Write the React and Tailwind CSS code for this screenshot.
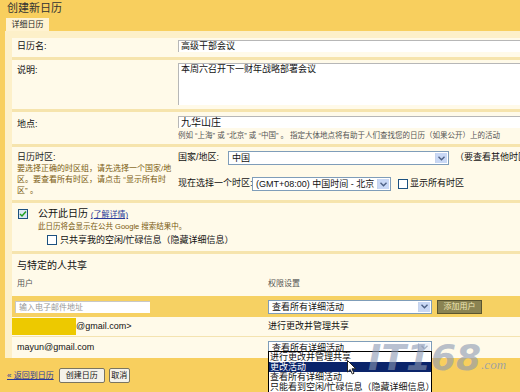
import React from 'react'

const FONT = { fontFamily: "'Liberation Sans', 'Noto Sans CJK SC', sans-serif" }

function Arrow({ faded }) {
  return (
    <div className={`w-[12px] h-full flex items-center justify-center border-l border-[#c6d3ec] ${faded ? 'bg-[#eef1f7]' : 'bg-[#c9d8f5]'}`}>
      <svg width="7" height="5" viewBox="0 0 7 5">
        <path d="M0.5 0.8 L3.5 3.8 L6.5 0.8" fill="none" stroke={faded ? '#a9b3c6' : '#4d6185'} strokeWidth="1.4" />
      </svg>
    </div>
  )
}

function Select({ w, text, faded }) {
  return (
    <div className={`${w} h-[14px] shrink-0 bg-white border border-[#7f9db9] flex items-stretch`}>
      <span className="flex-1 pl-[3px] text-[9px] leading-[12px] text-[#111] whitespace-nowrap overflow-hidden">{text}</span>
      <div className="p-[1px] flex"><Arrow faded={faded} /></div>
    </div>
  )
}

function Box({ checked }) {
  return (
    <div className={`w-[10px] h-[10px] shrink-0 border border-[#1c5180] flex items-center justify-center ${checked ? 'bg-[#dbe6f3]' : 'bg-white'}`}>
      {checked && (
        <svg width="8" height="8" viewBox="0 0 8 8">
          <path d="M1 4 L3 6 L7 1.5" fill="none" stroke="#21a121" strokeWidth="1.5" />
        </svg>
      )}
    </div>
  )
}

function Row({ children, className = '' }) {
  return <div className={`flex border-b-[3px] border-[#f6e4ad] ${className}`}>{children}</div>
}

export default function App() {
  return (
    <div className="w-[520px] h-[392px] overflow-hidden relative bg-[#f8cf5e] text-[#111]" style={FONT}>
      {/* title */}
      <div className="h-[18px] pl-[7px] text-[11px] leading-[16px] text-[#333]">创建新日历</div>
      {/* tabs */}
      <div className="h-[13px] flex">
        <div className="ml-[6px] w-[43px] bg-[#fff3d2] text-[8px] leading-[13px] text-center text-[#222]">详细日历</div>
      </div>

      {/* panel */}
      <div className="ml-[5px] bg-[#fdf0c9] pt-[7px] pl-[7px] h-[327px]">
        <div className="bg-[#fffae9] h-full">
          <Row className="h-[22px]">
            <div className="w-[166px] shrink-0 pl-[5px] pt-[2px] text-[9px] leading-[12px]">日历名:</div>
            <div className="flex-1 min-w-0 pt-[2px]">
              <div className="h-[12px] bg-white border-t border-l border-[#b7b7b7] pl-[2px] text-[9px] leading-[11px]">高级干部会议</div>
            </div>
          </Row>
          <Row className="h-[52px]">
            <div className="w-[166px] shrink-0 pl-[5px] pt-[4px] text-[9px] leading-[12px]">说明:</div>
            <div className="flex-1 min-w-0 pt-[3px]">
              <div className="h-[42px] bg-white border-t border-l border-[#b7b7b7] pl-[2px] text-[9px] leading-[11px]">本周六召开下一财年战略部署会议</div>
            </div>
          </Row>
          <Row className="h-[35px]">
            <div className="w-[166px] shrink-0 pl-[5px] pt-[6px] text-[9px] leading-[12px]">地点:</div>
            <div className="flex-1 min-w-0 pt-[4px]">
              <div className="h-[12px] bg-white border-t border-l border-[#b7b7b7] pl-[2px] text-[10px] leading-[11px]">九华山庄</div>
              <div className="mt-[3px] text-[7.5px] leading-[10px] text-[#555] whitespace-nowrap overflow-hidden">例如 “上海” 或 “北京” 或 “中国” 。 指定大体地点将有助于人们查找您的日历（如果公开）上的活动</div>
            </div>
          </Row>
          <Row className="h-[56px]">
            <div className="w-[166px] shrink-0 pl-[5px] pt-[4px]">
              <div className="text-[9px] leading-[12px] text-[#222]">日历时区:</div>
              <div className="text-[8px] leading-[11px] text-[#7a5a10] w-[156px]">要选择正确的时区组，请先选择一个国家/地区。要查看所有时区，请点击 “显示所有时区” 。</div>
            </div>
            <div className="flex-1 min-w-0 pt-[4px]">
              <div className="flex items-center h-[14px]">
                <span className="w-[50px] shrink-0 text-[9px]">国家/地区:</span>
                <Select w="w-[221px]" text="中国" />
                <span className="ml-[6px] text-[9px] whitespace-nowrap">（要查看其他时区，</span>
              </div>
              <div className="flex items-center h-[14px] mt-[12px]">
                <span className="w-[74px] shrink-0 text-[9px] whitespace-nowrap">现在选择一个时区:</span>
                <Select w="w-[139px]" text="(GMT+08:00) 中国时间 - 北京" />
                <div className="ml-[7px]"><Box /></div>
                <span className="ml-[2px] text-[9px] whitespace-nowrap">显示所有时区</span>
              </div>
            </div>
          </Row>
          <Row className="h-[51px]">
            <div className="pl-[6px] pt-[5px] flex">
              <div className="pt-[1px]"><Box checked /></div>
              <div className="ml-[10px]">
                <div className="text-[10px] leading-[12px]">
                  公开此日历 <span className="text-[8px] text-[#2a3a9a] underline">(了解详情)</span>
                </div>
                <div className="text-[7.5px] leading-[11px] text-[#7a5a10]">此日历将会显示在公共 Google 搜索结果中。</div>
                <div className="flex items-center mt-[2px] ml-[9px]">
                  <Box />
                  <span className="ml-[3px] text-[9px] leading-[12px]">只共享我的空闲/忙碌信息（隐藏详细信息）</span>
                </div>
              </div>
            </div>
          </Row>

          {/* share */}
          <div className="pt-[5px]">
            <div className="pl-[5px] text-[10px] leading-[13px]">与特定的人共享</div>
            <div className="flex mt-[6px] h-[14px] text-[8px] leading-[12px] text-[#555]">
              <div className="w-[256px] shrink-0 pl-[5px]">用户</div>
              <div>权限设置</div>
            </div>
            <div className="mt-[4px] h-[21px] bg-[#f6d163] flex items-center">
              <div className="w-[256px] shrink-0 pl-[3px]">
                <div className="w-[135px] h-[12px] bg-white border-t border-l border-[#c8c8c8] pl-[3px] text-[8px] leading-[11px] text-[#999]">输入电子邮件地址</div>
              </div>
              <Select w="w-[164px]" text="查看所有详细活动" />
              <div className="ml-[5px] w-[45px] h-[14px] bg-[#8a8352] border border-[#5a5530] text-[#efe7b4] text-[8px] leading-[12px] text-center">添加用户</div>
            </div>
            <div className="h-[20px] flex items-center border-b border-[#f4e3b0]">
              <div className="w-[256px] shrink-0 flex items-center h-full">
                <div className="w-[64px] h-[17px] bg-[#edc900]" />
                <span className="text-[9px]">@gmail.com&gt;</span>
              </div>
              <span className="text-[9px]">进行更改并管理共享</span>
            </div>
            <div className="h-[21px] flex items-center">
              <div className="w-[256px] shrink-0 pl-[5px] text-[9px]">mayun@gmail.com</div>
              <Select w="w-[164px]" text="查看所有详细活动" faded />
            </div>
          </div>
        </div>
      </div>

      {/* bottom bar */}
      <div className="flex items-center h-[30px] pl-[7px] pt-[5px]">
        <span className="text-[8px] text-[#2a3a9a] underline">« 返回到日历</span>
        <div className="ml-[5px] w-[46px] h-[15px] bg-[#f4f2ea] border border-[#7a7560] rounded-[2px] text-[8px] leading-[13px] text-center">创建日历</div>
        <div className="ml-[4px] w-[21px] h-[15px] bg-[#f4f2ea] border border-[#7a7560] rounded-[2px] text-[8px] leading-[13px] text-center">取消</div>
      </div>

      {/* open dropdown */}
      <div className="absolute left-[268px] top-[351px] w-[164px] h-[45px] bg-white border border-black text-[9px] leading-[10px]">
        <div className="pl-[1px]">进行更改并管理共享</div>
        <div className="pl-[1px] bg-[#0a246a] text-white">更改活动</div>
        <div className="pl-[1px]">查看所有详细活动</div>
        <div className="pl-[1px] whitespace-nowrap">只能看到空闲/忙碌信息（隐藏详细信息）</div>
      </div>

      {/* cursor */}
      <svg className="absolute left-[347px] top-[360px]" width="10" height="15" viewBox="0 0 10 15">
        <path d="M0.5 0.5 L0.5 12 L3.2 9.5 L5.3 14 L7 13.2 L5 8.8 L8.8 8.8 Z" fill="white" stroke="#222" strokeWidth="1" />
      </svg>

      {/* watermark */}
      <div className="absolute left-[368px] top-[338px] w-[150px] flex items-end pointer-events-none select-none">
        <span className="text-[36px] leading-[40px] font-bold italic text-[#8a97b2]/60 whitespace-nowrap" style={{ fontFamily: "'DejaVu Sans', sans-serif" }}>IT168</span>
        <span className="text-[13px] leading-[18px] italic text-[#8a97b2]/80 mb-[4px] whitespace-nowrap" style={{ fontFamily: "'Liberation Serif', serif" }}>.com</span>
      </div>
    </div>
  )
}
